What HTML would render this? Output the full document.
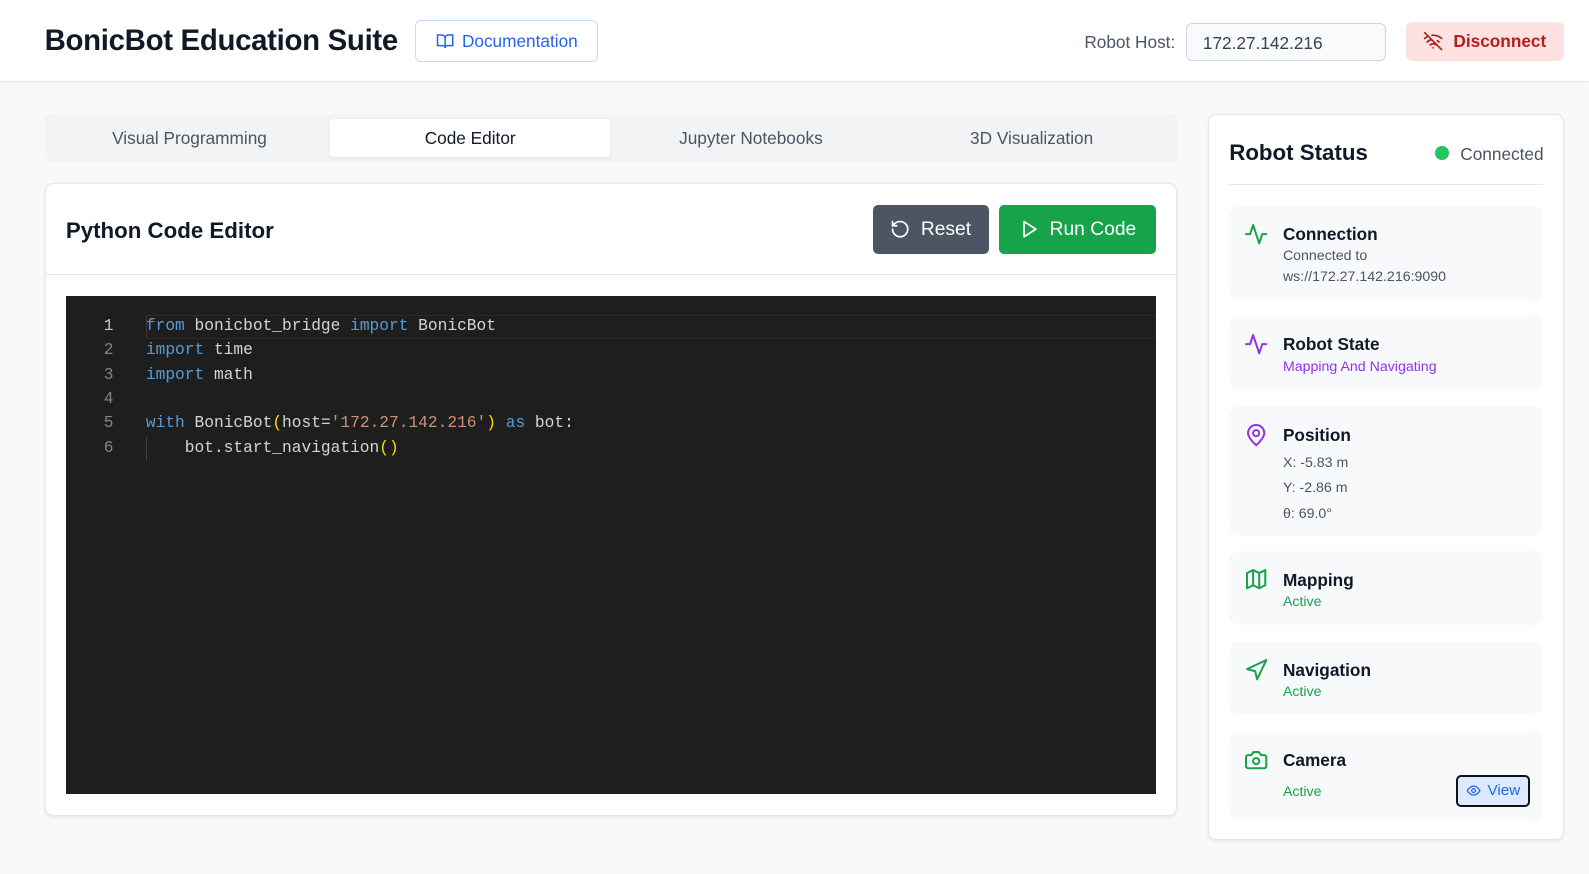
<!DOCTYPE html>
<html style="zoom:1.0134"><head><meta charset="utf-8"><style>
*{box-sizing:border-box;margin:0;padding:0}
body{width:1568px;height:862px;background:#f8f9fb;font-family:"Liberation Sans",sans-serif;position:relative;overflow:hidden;color:#111827}
.abs{position:absolute}
header{position:absolute;left:0;top:0;width:1568px;height:81px;background:#fff;border-bottom:1px solid #e5e7eb;box-shadow:0 1px 2px rgba(0,0,0,.04)}
.title{left:44px;top:24px;font-size:29px;font-weight:bold;letter-spacing:-.3px}
.doc{left:410px;top:20px;width:180px;height:41px;border:1px solid #bfdbfe;border-radius:6px;color:#2563eb;font-size:17px;display:flex;align-items:center;justify-content:center;gap:8px}
.hostl{left:1070px;top:32px;font-size:17px;color:#4b5563}
.input{left:1170px;top:23px;width:198px;height:37px;border:1px solid #d1d5db;border-radius:6px;background:#f9fafb;font-size:17px;color:#374151;padding:9px 0 0 16px}
.disc{left:1387px;top:22px;width:156px;height:38px;border-radius:6px;background:#fee2e2;color:#b91c1c;font-weight:bold;font-size:17px;display:flex;align-items:center;justify-content:center;gap:10px}
.tabs{left:44px;top:112px;width:1117px;height:48px;background:#f1f3f5;border-radius:6px}
.tab{position:absolute;top:5px;height:38px;width:276px;text-align:center;line-height:38px;font-size:17px;color:#4b5563}
.tab.on{background:#fff;color:#111827;border-radius:3px;box-shadow:0 1px 2px rgba(0,0,0,.06)}
.card{background:#fff;border:1px solid #e5e7eb;border-radius:8px;box-shadow:0 1px 3px rgba(0,0,0,.08)}
.btn{position:absolute;top:20px;height:49px;border-radius:5px;color:#fff;font-size:19px;display:flex;align-items:center;justify-content:center;gap:10px}
.code{left:20px;top:110px;width:1076px;height:492px;background:#1e1e1e;font-family:"Liberation Mono",monospace;font-size:16px;color:#d4d4d4}
.ln{position:absolute;left:0;width:47px;text-align:right;color:#858585}
.cl{position:absolute;left:79px;white-space:pre}
.k{color:#569cd6}.s{color:#ce9178}.p{color:#ffd700}
.item{position:absolute;left:20px;width:310px;background:#f8f9fb;border-radius:10px}
.item .ic{position:absolute;left:15px;top:16px}
.it{position:absolute;left:53px;top:18px;font-size:17px;font-weight:bold;color:#111827}
.is{position:absolute;left:53px;font-size:14px;color:#4b5563;line-height:20px}
</style></head><body>
<header>
<div class="abs title">BonicBot Education Suite</div>
<div class="abs doc"><svg width="18" height="18" viewBox="0 0 24 24" fill="none" stroke="#2563eb" stroke-width="2"><path d="M2 4h6a4 4 0 0 1 4 4v13a3 3 0 0 0-3-3H2zM22 4h-6a4 4 0 0 0-4 4v13a3 3 0 0 1 3-3h7z"/></svg>Documentation</div>
<div class="abs hostl">Robot Host:</div>
<div class="abs input">172.27.142.216</div>
<div class="abs disc"><svg width="20" height="20" viewBox="0 0 24 24" fill="none" stroke="#b91c1c" stroke-width="2" stroke-linecap="round"><path d="M2 2l20 20M8.5 16.5a5 5 0 0 1 7 0M5 13a10 10 0 0 1 5.2-2.8M19 13a10 10 0 0 0-2-1.5M2 8.8a15 15 0 0 1 4.2-2.6M22 8.8A15 15 0 0 0 10.7 5M12 20h.01"/></svg>Disconnect</div>
</header>
<div class="abs tabs">
<div class="tab" style="left:5px">Visual Programming</div>
<div class="tab on" style="left:282px">Code Editor</div>
<div class="tab" style="left:559px">Jupyter Notebooks</div>
<div class="tab" style="left:836px">3D Visualization</div>
</div>
<div class="abs card" style="left:44px;top:181px;width:1117px;height:624px">
<div class="abs" style="left:0;top:0;width:1115px;height:89px;border-bottom:1px solid #e5e7eb"></div>
<div class="abs" style="left:20px;top:33px;font-size:22px;font-weight:600">Python Code Editor</div>
<div class="btn" style="left:816px;width:115px;background:#4b5563"><svg width="20" height="20" viewBox="0 0 24 24" fill="none" stroke="#fff" stroke-width="2" stroke-linecap="round"><path d="M3 12a9 9 0 1 0 9-9 9.7 9.7 0 0 0-6.7 2.7L3 8"/><path d="M3 3v5h5"/></svg>Reset</div>
<div class="btn" style="left:941px;width:155px;background:#16a34a"><svg width="20" height="20" viewBox="0 0 24 24" fill="none" stroke="#fff" stroke-width="2" stroke-linejoin="round"><path d="M6 3l14 9-14 9z"/></svg>Run Code</div>
<div class="abs code">
<div class="abs" style="left:79px;top:19px;width:997px;height:24px;border:1px solid #2a2a2a;border-left:1px solid #3a3a3a"></div>
<div class="abs" style="left:79px;top:139px;width:1px;height:24px;background:#404040"></div>
<div class="ln" style="top:21px;color:#c6c6c6">1</div><div class="cl" style="top:21px"><span class="k">from</span> bonicbot_bridge <span class="k">import</span> BonicBot</div>
<div class="ln" style="top:45px">2</div><div class="cl" style="top:45px"><span class="k">import</span> time</div>
<div class="ln" style="top:69px">3</div><div class="cl" style="top:69px"><span class="k">import</span> math</div>
<div class="ln" style="top:93px">4</div>
<div class="ln" style="top:117px">5</div><div class="cl" style="top:117px"><span class="k">with</span> BonicBot<span class="p">(</span>host=<span class="s">'172.27.142.216'</span><span class="p">)</span> <span class="k">as</span> bot:</div>
<div class="ln" style="top:141px">6</div><div class="cl" style="top:141px">    bot.start_navigation<span class="p">()</span></div>
</div>
</div>
<div class="abs card" style="left:1192px;top:112px;width:351px;height:717px">
<div class="abs" style="left:20px;top:25px;font-size:22px;font-weight:600">Robot Status</div>
<div class="abs" style="left:223px;top:31px;width:14px;height:14px;border-radius:50%;background:#22c55e"></div>
<div class="abs" style="left:248px;top:29px;font-size:17px;color:#4b5563">Connected</div>
<div class="abs" style="left:20px;top:69px;width:310px;height:1px;background:#e5e7eb"></div>
<div class="item" style="top:90px;height:93px"><svg class="ic" width="24" height="24" viewBox="0 0 24 24" fill="none" stroke="#16a34a" stroke-width="2" stroke-linecap="round" stroke-linejoin="round"><path d="M22 12h-4l-3 9L9 3l-3 9H2"/></svg><div class="it">Connection</div><div class="is" style="top:40px">Connected to<br>ws://172.27.142.216:9090</div></div>
<div class="item" style="top:199px;height:73px"><svg class="ic" width="24" height="24" viewBox="0 0 24 24" fill="none" stroke="#9333ea" stroke-width="2" stroke-linecap="round" stroke-linejoin="round"><path d="M22 12h-4l-3 9L9 3l-3 9H2"/></svg><div class="it">Robot State</div><div class="is" style="top:40px;color:#9333ea">Mapping And Navigating</div></div>
<div class="item" style="top:288px;height:128px"><svg class="ic" width="24" height="24" viewBox="0 0 24 24" fill="none" stroke="#9333ea" stroke-width="2" stroke-linecap="round" stroke-linejoin="round"><path d="M20 10c0 5-8 12-8 12s-8-7-8-12a8 8 0 0 1 16 0z"/><circle cx="12" cy="10" r="3"/></svg><div class="it">Position</div><div class="is" style="top:44px;line-height:25px">X: -5.83 m<br>Y: -2.86 m<br>θ: 69.0°</div></div>
<div class="item" style="top:431px;height:73px"><svg class="ic" width="24" height="24" viewBox="0 0 24 24" fill="none" stroke="#16a34a" stroke-width="2" stroke-linejoin="round"><path d="M3 6l6-3 6 3 6-3v15l-6 3-6-3-6 3zM9 3v15M15 6v15"/></svg><div class="it">Mapping</div><div class="is" style="top:40px;color:#16a34a">Active</div></div>
<div class="item" style="top:520px;height:73px"><svg class="ic" width="24" height="24" viewBox="0 0 24 24" fill="none" stroke="#16a34a" stroke-width="2" stroke-linejoin="round"><path d="M3 11l19-9-9 19-2-8z"/></svg><div class="it">Navigation</div><div class="is" style="top:40px;color:#16a34a">Active</div></div>
<div class="item" style="top:609px;height:87px"><svg class="ic" width="24" height="24" viewBox="0 0 24 24" fill="none" stroke="#16a34a" stroke-width="2" stroke-linejoin="round"><path d="M14.5 4h-5L7 7H4a2 2 0 0 0-2 2v9a2 2 0 0 0 2 2h16a2 2 0 0 0 2-2V9a2 2 0 0 0-2-2h-3z"/><circle cx="12" cy="13" r="3"/></svg><div class="it">Camera</div><div class="is" style="top:50px;color:#16a34a">Active</div>
<div class="abs" style="left:224px;top:43px;width:73px;height:31px;border:2px solid #111;border-radius:5px;background:#dbeafe;color:#2563eb;font-size:15px;display:flex;align-items:center;justify-content:center;gap:6px"><svg width="15" height="15" viewBox="0 0 24 24" fill="none" stroke="#2563eb" stroke-width="2"><path d="M2 12s3.5-7 10-7 10 7 10 7-3.5 7-10 7S2 12 2 12z"/><circle cx="12" cy="12" r="3"/></svg>View</div></div>
</div>
</body></html>
